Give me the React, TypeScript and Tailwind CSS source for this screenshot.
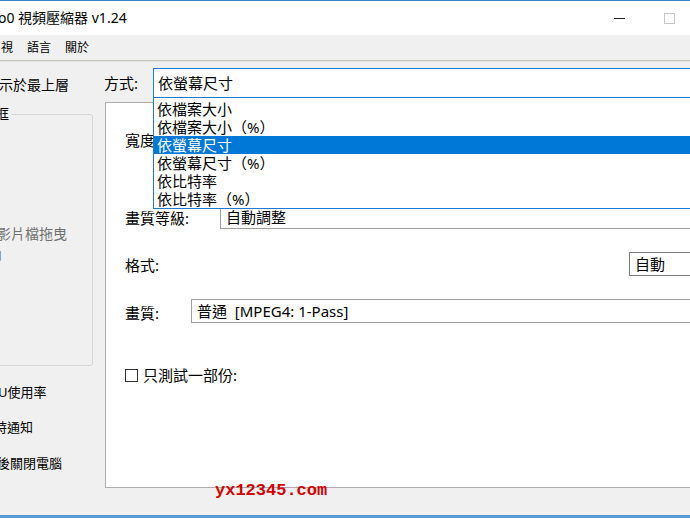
import { X } from "lucide-react";

const options = [
  "依檔案大小",
  "依檔案大小（%）",
  "依螢幕尺寸",
  "依螢幕尺寸（%）",
  "依比特率",
  "依比特率（%）",
];

const font = "font-['Noto_Sans','Noto_Sans_CJK_TC',sans-serif]";

function App() {
  const selected = 2;

  return (
    <div className={`w-[690px] h-[518px] overflow-hidden relative bg-[#f0f0f0] text-black ${font}`}>
      <div className="w-[744px] h-full flex flex-col">
        {/* window border */}
        <div className="h-px bg-[#3a84c8]" />

        {/* title bar */}
        <div className="h-[34px] bg-white flex items-center">
          <span className="-ml-[2px] text-[14px] leading-[20px] whitespace-pre">o0 視頻壓縮器 v1.24</span>
          <div className="ml-auto flex h-full">
            <div className="w-[50px] h-full flex items-center justify-center">
              <span className="block w-[11px] h-px bg-[#222]" />
            </div>
            <div className="w-[50px] h-full flex items-center justify-center">
              <span className="block w-[11px] h-[11px] border border-[#c6c6c6]" />
            </div>
            <div className="w-[50px] h-full flex items-center justify-center">
              <X size={14} strokeWidth={1} />
            </div>
          </div>
        </div>

        {/* menu bar */}
        <div className="h-[25px] flex items-center gap-[14px] pl-px text-[12px] leading-[16px]">
          <span>視</span>
          <span>語言</span>
          <span>關於</span>
        </div>
        <div className="h-px bg-[#c4c2bc]" />
        <div className="h-px bg-[#e4e3df]" />

        {/* body */}
        <div className="flex-1 flex">
          {/* left column, cropped by the screenshot */}
          <div className="w-[104px] flex flex-col text-[14px] leading-[20px]">
            <span className="mt-[13px] -ml-px whitespace-nowrap">示於最上層</span>
            <fieldset className="mt-[9px] -ml-[20px] w-[113px] h-[262px] border border-[#d8d8d8] rounded-[3px] pl-[10px]">
              <legend className="px-[2px] ml-[2px] leading-[20px]">框</legend>
              <div className="mt-[100px] ml-[8px] text-[#707070] leading-[20px] whitespace-nowrap">
                <div className="-ml-[2px]">影片檔拖曳</div>
                <div className="-ml-[11px]">內</div>
              </div>
            </fieldset>
            <div className="text-[13px] leading-[20px] whitespace-nowrap">
              <div className="mt-[16px] -ml-[2px]">U使用率</div>
              <div className="mt-[15px] -ml-[6px]">時通知</div>
              <div className="mt-[16px] -ml-[3px]">後關閉電腦</div>
            </div>
          </div>

          {/* main column */}
          <div className="flex-1 flex flex-col text-[15px]">
            <div className="mt-[6px] flex items-center relative z-10">
              <span className="w-[49px] leading-[20px]">方式:</span>
              <div className="flex-1 h-[30px] border border-[#1e7bd4] bg-white flex items-center pl-[4px] leading-[20px]">
                依螢幕尺寸
              </div>
              <div className="absolute left-[49px] right-0 top-[30px] bg-white border-x border-b border-[#1e7bd4] pt-[2px]">
                {options.map((opt, idx) => (
                  <div
                    key={opt}
                    className={`h-[18px] leading-[18px] pl-[3px] whitespace-nowrap ${idx === selected ? "bg-[#0078d7] text-white" : ""}`}
                  >
                    {opt}
                  </div>
                ))}
              </div>
            </div>

            <div className="mt-[4px] ml-px h-[386px] bg-white border border-[#adadad] pl-[19px] pr-[10px] flex flex-col leading-[20px]">
              <div className="mt-[25px] h-[24px] flex items-center">
                <span className="w-[95px]">寬度:</span>
                <div className="w-[120px] h-[24px] border border-[#a0a0a0]" />
              </div>
              <div className="mt-[53px] h-[24px] flex items-center">
                <span className="w-[95px] pt-[2px]">畫質等級:</span>
                <div className="flex-1 h-[24px] border border-[#a0a0a0] flex items-center pl-[5px]">自動調整</div>
              </div>
              <div className="mt-[23px] h-[24px] flex items-center">
                <span className="w-[504px] pt-[2px]">格式:</span>
                <div className="w-[100px] h-[24px] border border-[#7d7d7d] flex items-center pl-[5px]">自動</div>
              </div>
              <div className="mt-[23px] h-[24px] flex items-center">
                <span className="w-[66px] pt-[3px]">畫質:</span>
                <div className="flex-1 h-[24px] border border-[#a0a0a0] flex items-center pl-[5px] whitespace-pre">
                  普通  [MPEG4: 1-Pass]
                </div>
              </div>
              <div className="mt-[40px] h-[24px] flex items-center gap-[5px]">
                <span className="block w-[13px] h-[13px] border border-[#333] bg-white" />
                <span>只測試一部份:</span>
              </div>
            </div>
          </div>
        </div>

        <div className="h-[3px] bg-[#5b9bd5]" />
      </div>

      {/* watermark */}
      <div className="absolute left-[215px] top-[482px] font-['Liberation_Mono',monospace] font-bold text-[17px] leading-[17px] text-[#d40000]">
        yx12345.com
      </div>
    </div>
  );
}

export default App;
